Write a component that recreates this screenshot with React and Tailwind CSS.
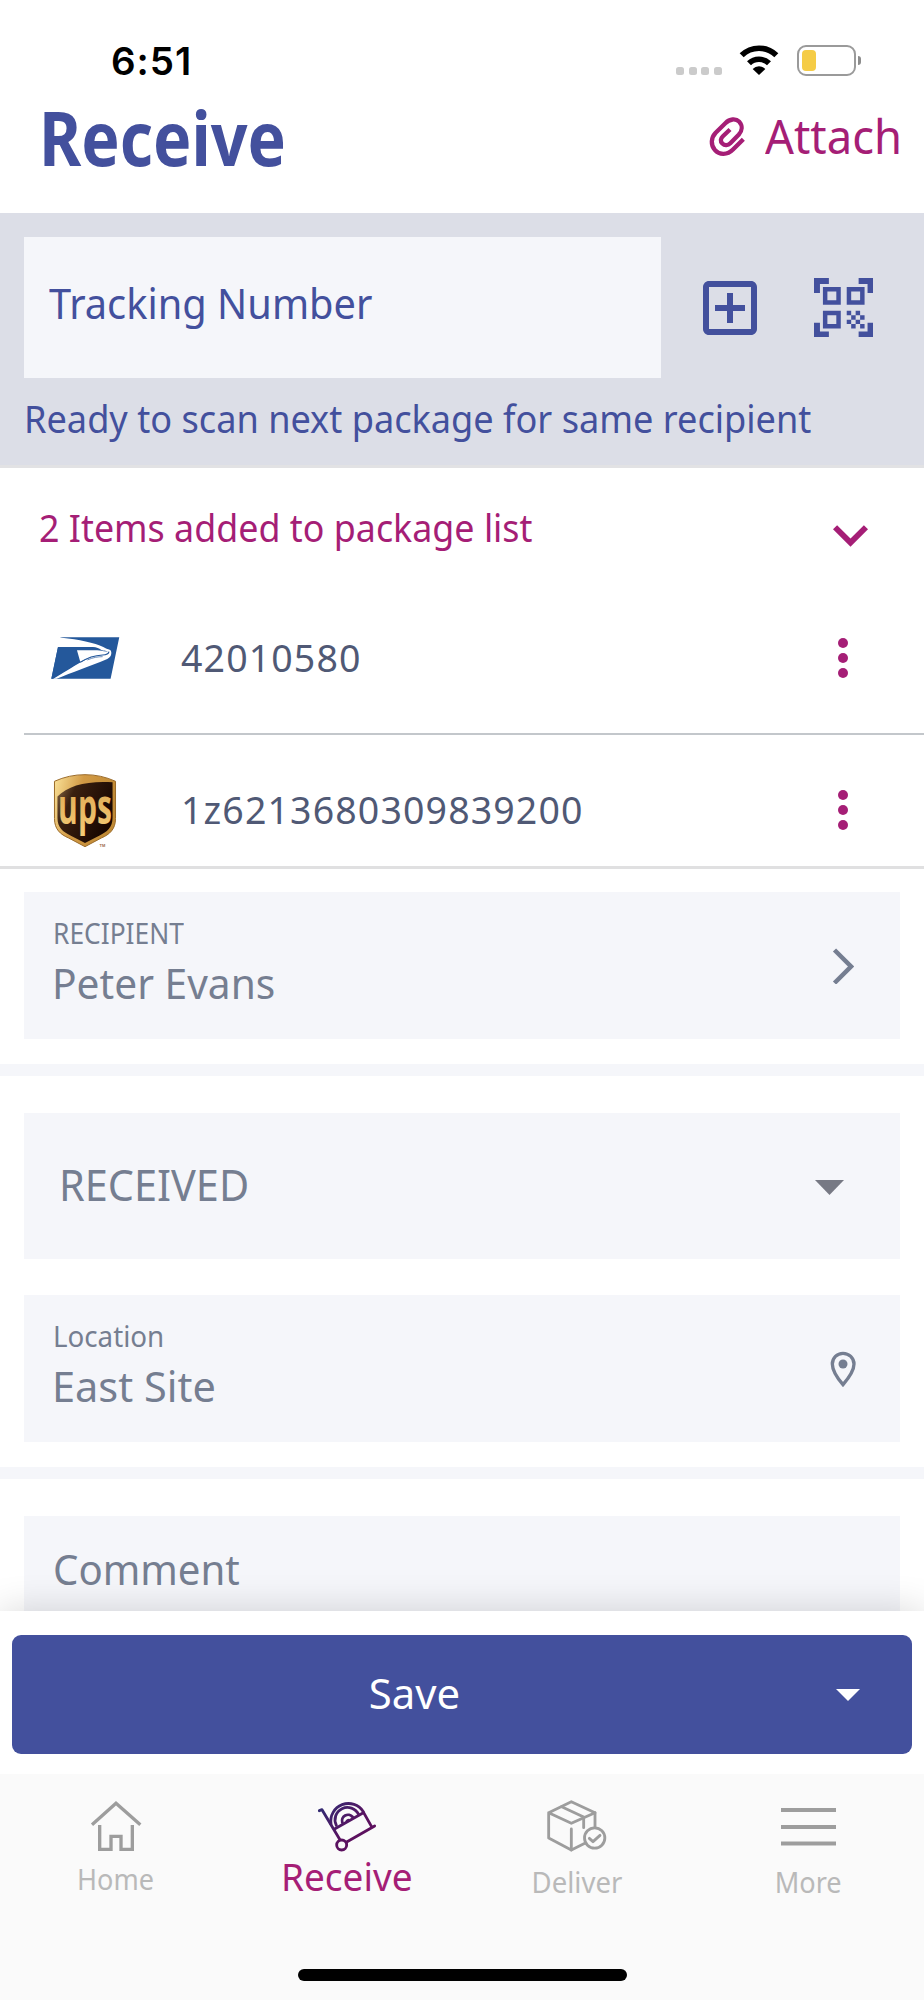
import React from "react";

const strokeProps = { fill: "none", strokeLinecap: "round", strokeLinejoin: "round" };

function StatusBar() {
  return (
    <div className="flex h-[96px] shrink-0 items-start pl-[111px] pr-[63px] pt-[37px]">
      <span className="font-['Inter'] text-[38.5px] font-semibold leading-[48px] tracking-[0.96px] text-black">6:51</span>
      <div className="ml-auto flex h-[46px] items-end">
        <div className="mb-2 flex gap-[4.7px]">
          {[0, 1, 2, 3].map((i) => (
            <span key={i} className="size-2 rounded-[2.5px] bg-[#cbcbcb]" />
          ))}
        </div>
        <svg className="mb-2 ml-[17px] h-[30px] w-10" viewBox="298 78 120 90" fill="none" stroke="#000" strokeWidth="17">
          <path d="M306 109A74 74 0 0 1 410 109" />
          <path d="M328 133A43 43 0 0 1 388 133" />
          <path d="M358 168L339 150A26 26 0 0 1 377 150Z" fill="#000" stroke="none" />
        </svg>
        <div className="mb-[7px] ml-[18px] flex h-[31px] w-[59px] items-center rounded-[9px] border-2 border-[#9a9a9a] pl-[3px]">
          <span className="h-[21px] w-[14px] rounded-[4px] bg-[#f5cc46]" />
        </div>
        <span className="mb-[18px] ml-0.5 h-[9px] w-[3px] rounded-r-full bg-[#8c8c8c]" />
      </div>
    </div>
  );
}

function Header() {
  return (
    <div className="flex h-[117px] shrink-0 items-start justify-between pl-[39px] pr-[22px]">
      <h1 className="mt-[2px] inline-block origin-left scale-x-[0.859] text-[75px] font-bold leading-[79px] text-[#43509d]">Receive</h1>
      <div className="mt-px flex h-[79px] items-center text-[#a51e76]">
        <svg className="mr-[20px] h-[41px] w-9" viewBox="208 290 108 122" stroke="currentColor" strokeWidth="13" {...strokeProps} strokeLinecap="butt">
          <path d="M311 359L280 390C263 407 239 407 226 392C212 376 214 355 228 340L257 311C270 298 288 296 299 307C309 318 308 334 297 346L272 371C265 378 255 379 248 372C241 365 243 357 249 351L271 330" />
        </svg>
        <span className="-mr-[5px] inline-block origin-left scale-x-[0.965] text-[47px] leading-[79px]">Attach</span>
      </div>
    </div>
  );
}

function ScanPanel() {
  return (
    <div className="h-[255px] shrink-0 border-b-[3px] border-[#e2e2e4] bg-[#dcdee7] pl-6 pt-6 text-[#43509d]">
      <div className="flex h-[141px] items-center">
        <div className="flex h-[141px] w-[637px] bg-[#f5f6fa] pl-[25px]">
          <span className="inline-block origin-left scale-x-[0.936] text-[42.5px] leading-[132px]">Tracking Number</span>
        </div>
        <svg className="ml-[42px] size-[54px]" viewBox="3 3 18 18" fill="currentColor">
          <path d="M19 3H5c-1.100 0-2 .9-2 2v14c0 1.100.9 2 2 2h14c1.100 0 2-.9 2-2V5c0-1.100-.9-2-2-2zm0 16H5V5h14v14zm-8-2h2v-4h4v-2h-4V7h-2v4H7v2h4z" />
        </svg>
        <svg className="ml-[56.500px] size-[59.500px]" viewBox="2 2 20 20" fill="currentColor">
          <path d="M9.5 6.500v3h-3v-3h3M11 5H5v6h6V5zM9.500 14.500v3h-3v-3h3M11 13H5v6h6v-6zM17.500 6.500v3h-3v-3h3M19 5h-6v6h6V5zM13 13h1.500v1.500H13V13zM14.500 14.500H16V16h-1.500v-1.500zM16 13h1.500v1.500H16V13zM13 16h1.500v1.500H13V16zM14.500 17.500H16V19h-1.500v-1.500zM16 16h1.500v1.500H16V16zM17.500 14.500H19V16h-1.500v-1.500zM17.500 17.500H19V19h-1.500v-1.500zM22 7h-2V4h-3V2h5v5zM22 22v-5h-2v3h-3v2h5zM2 22h5v-2H4v-3H2v5zM2 2v5h2V4h3V2H2z" />
        </svg>
      </div>
      <p className="mt-[15px] inline-block origin-left scale-x-[0.9636] whitespace-nowrap text-[37.5px] leading-[52px]">
        Ready to scan next package for same recipient
      </p>
    </div>
  );
}

function UspsLogo() {
  return (
    <svg className="h-11 w-[70.600px]" viewBox="150 468 212 132">
      <path d="M186 472H358L332 596H154L174 501L180 472Z" fill="#24589b" />
      <path d="M170 468L186 473C235 478 285 488 310 501C318 506 322 507 331 510C337 517 335 531 322 537C270 559 215 578 170 596H160C205 571 240 544 288 525C305 519 318 522 326 517C322 511 312 513 303 509C296 503 285 501 265 501H174Z" fill="#fff" />
      <path d="M174 501H270C288 502 297 506 302 512H231L241 546C215 560 185 579 158 596H154Z" fill="#24589b" />
      <path d="M231 511H292C304 511 310 516 327 514C325 523 312 523 297 525C275 529 258 537 241 546Z" fill="#fff" />
      <path d="M241 547C258 536 285 526 308 525C318 525 326 522 327 515" fill="none" stroke="#24589b" strokeWidth="3.500" />
      <path d="M262 540C280 532 295 530 308 530" fill="none" stroke="#24589b" strokeWidth="2" />
    </svg>
  );
}

function UpsLogo() {
  return (
    <svg className="h-[75px] w-16 overflow-visible" viewBox="160 875 192 226">
      <defs>
        <linearGradient id="gold" x1="0" y1="0" x2="1" y2="0.300">
          <stop offset="0" stopColor="#fbe39a" />
          <stop offset="0.450" stopColor="#d29a45" />
          <stop offset="1" stopColor="#c08a35" />
        </linearGradient>
        <linearGradient id="brown" x1="0" y1="0" x2="1" y2="0.500">
          <stop offset="0" stopColor="#8a6a45" />
          <stop offset="0.300" stopColor="#3a2010" />
          <stop offset="1" stopColor="#180600" />
        </linearGradient>
        <linearGradient id="letters" x1="0" y1="0" x2="0" y2="1">
          <stop offset="0" stopColor="#d9a04a" />
          <stop offset="1" stopColor="#f5cd78" />
        </linearGradient>
      </defs>
      <path d="M164 900Q208 880 256 880Q304 880 348 900V1012C348 1045 330 1060 305 1071L256 1097L207 1071C182 1060 164 1045 164 1012Z" fill="url(#gold)" stroke="#9a6a28" strokeWidth="3" />
      <path d="M173 946C205 912 265 898 339 903V1010C339 1040 322 1053 300 1063L256 1086L212 1063C190 1053 173 1040 173 1010Z" fill="url(#brown)" />
      <text x="175" y="1028" textLength="162" lengthAdjust="spacingAndGlyphs" fontFamily="'Open Sans'" fontWeight="700" fontSize="143" fill="url(#letters)">ups</text>
      <text x="300" y="1099" fontFamily="'Liberation Sans'" fontWeight="700" fontSize="12" fill="#9a6a48">TM</text>
    </svg>
  );
}

function PackageRow({ logo, children }) {
  return (
    <div className="flex h-[150px] shrink-0 items-center pr-[76px]">
      <div className="flex w-[130px] shrink-0 justify-center">{logo}</div>
      <span className="mb-px text-[37.500px] leading-[52px] text-[#505975]">{children}</span>
      <div className="ml-auto flex flex-col gap-[5px] text-[#a51e76]">
        {[0, 1, 2].map((i) => (
          <span key={i} className="size-[10px] rounded-full bg-current" />
        ))}
      </div>
    </div>
  );
}

function PackageList() {
  return (
    <div className="flex h-[401px] shrink-0 flex-col overflow-hidden border-b-[3px] border-[#e0e0e1]">
      <div className="flex h-[115px] shrink-0 items-start pl-[39px] pr-[56px] pt-[34px] text-[#a51e76]">
        <span className="inline-block origin-left scale-x-[0.9555] text-[37.500px] leading-[52px]">2 Items added to package list</span>
        <svg className="ml-auto mt-[23px] h-[22px] w-[35px]" viewBox="6 8.590 12 7.410" fill="currentColor">
          <path d="M16.590 8.590L12 13.170 7.410 8.590 6 10l6 6 6-6z" />
        </svg>
      </div>
      <div className="ml-6 shrink-0 border-b-2 border-[#c3c7cb]">
        <div className="-ml-6">
          <PackageRow logo={<span className="pl-[41px]"><UspsLogo /></span>}>
            <span className="ml-[51px] tracking-[1.120px]">42010580</span>
          </PackageRow>
        </div>
      </div>
      <PackageRow logo={<span className="pl-10"><UpsLogo /></span>}>
        <span className="ml-[51px] tracking-[1.130px]">1z6213680309839200</span>
      </PackageRow>
    </div>
  );
}

function Band() {
  return <div className="h-3 shrink-0 bg-[#f5f6fa]" />;
}

function Form() {
  return (
    <div className="flex h-[742px] shrink-0 flex-col overflow-hidden text-[#757e91]">
      <div className="mx-6 mt-[23px] flex h-[147px] shrink-0 items-center justify-between bg-[#f5f6fa] pl-[29px] pr-[46px]">
        <div className="flex flex-col items-start">
          <span className="inline-block origin-left scale-x-[0.909] text-[29px] leading-10">RECIPIENT</span>
          <span className="mb-[15px] mt-[10px] inline-block origin-left scale-x-[0.957] text-[42.500px] leading-10 -ml-px">Peter Evans</span>
        </div>
        <svg className="h-[36px] w-[22px]" viewBox="0 0 22 36" fill="none" stroke="currentColor" strokeWidth="4.500">
          <path d="M2.500 2L19 18.500L2.500 35" />
        </svg>
      </div>
      <div className="h-[25px] shrink-0" />
      <Band />
      <div className="mx-6 mt-[37px] flex h-[146px] shrink-0 items-center justify-between bg-[#f5f6fa] pl-[35px] pr-14">
        <span className="mb-[3px] inline-block origin-left scale-x-[0.963] text-[43px] leading-[60px]">RECEIVED</span>
        <svg className="mt-[3px] h-[15px] w-[29px]" viewBox="0 0 29 15" fill="#777984"><path d="M0 0H29L14.500 15Z" /></svg>
      </div>
      <div className="mx-6 mt-9 flex h-[147px] shrink-0 items-center justify-between bg-[#f5f6fa] pl-[29px] pr-11">
        <div className="flex flex-col items-start">
          <span className="inline-block origin-left scale-x-[0.956] text-[29px] leading-10">Location</span>
          <span className="mb-[15px] mt-[10px] inline-block origin-left scale-x-[0.976] text-[42.500px] leading-10 -ml-px">East Site</span>
        </div>
        <svg className="h-[36px] w-[26px]" viewBox="391 751 78 108" fill="none" stroke="currentColor" strokeWidth="10">
          <path d="M430 758C412 758 398 772 398 790C398 811 412 831 430 852C448 831 463 811 463 790C463 772 448 758 430 758Z" />
          <circle cx="430" cy="790" r="13.500" fill="currentColor" stroke="none" />
        </svg>
      </div>
      <div className="h-[25px] shrink-0" />
      <Band />
      <div className="mx-6 mt-[37px] flex h-[147px] shrink-0 items-start bg-[#f5f6fa] pl-[29px] pt-[23px]">
        <span className="inline-block origin-left scale-x-[0.945] text-[42.500px] leading-[60px]">Comment</span>
      </div>
    </div>
  );
}

function SaveBar() {
  return (
    <div className="relative h-[163px] shrink-0 bg-white px-3 pt-6 shadow-[0_0_36px_rgba(0,0,0,0.16)]">
      <div className="flex h-[118.500px] items-center rounded-[9px] bg-[#43509d] pr-[52px] text-white">
        <span className="mb-[3px] flex-1 pr-[20px] text-center text-[42.500px] leading-[60px]">
          <span className="inline-block scale-x-[0.985]">Save</span>
        </span>
        <svg className="mt-[2px] h-3 w-6" viewBox="0 0 24 12" fill="currentColor"><path d="M0 0H24L12 12Z" /></svg>
      </div>
    </div>
  );
}

function HomeIcon() {
  return (
    <svg className="h-[52px] w-[52px]" viewBox="269 599 156 156" fill="none" stroke="#9d9d9d" strokeWidth="10">
      <path d="M275 673L347 608.500L420 673" />
      <path d="M298 674V747H332V708H362V747H396V674" />
    </svg>
  );
}

function CartIcon() {
  return (
    <svg className="h-[52px] w-[60px]" viewBox="949 599 180 156" stroke="url(#cart)" strokeWidth="8.500" {...strokeProps}>
      <defs>
        <linearGradient id="cart" gradientUnits="userSpaceOnUse" x1="960" y1="610" x2="1100" y2="750">
          <stop offset="0" stopColor="#2f2c73" />
          <stop offset="0.600" stopColor="#5a1260" />
          <stop offset="1" stopColor="#5f0f5c" />
        </linearGradient>
      </defs>
      <path d="M956 631L964 628L1017 717" />
      <circle cx="1023" cy="734" r="15" />
      <path d="M1038 725L1122 677M1089 637L1114 681" />
      <path d="M1003 685L1088 637" />
      <path d="M991 671A53 53 0 0 1 1088 634" />
      <path d="M1007 675A36 36 0 0 1 1074 642" />
      <path d="M1025 667A18 18 0 0 1 1056 650" />
      <path d="M1039 662L1043 660" />
    </svg>
  );
}

function BoxIcon() {
  return (
    <svg className="h-[52px] w-[61px]" viewBox="254 598 183 156" stroke="#9d9d9d" strokeWidth="8.500" {...strokeProps}>
      <path d="M330 603L401 636L330 668L262 636ZM262 636V712L330 748L372 727" />
      <path d="M330 685V748M401 636V680M301 618L367 649V681" />
      <circle cx="400" cy="712" r="30.500" />
      <path d="M384 713L395 723L416 704" />
    </svg>
  );
}

function MenuIcon() {
  return (
    <svg className="h-[52px] w-[55px]" viewBox="0 0 55 52" fill="#9d9d9d">
      <path d="M0 8H55V12H0ZM0 25H55V29H0ZM0 41.500H55V45.500H0Z" />
    </svg>
  );
}

function TabBar() {
  return (
    <div className="relative flex h-[226px] shrink-0 flex-col items-center bg-[#fafafa]">
      <div className="grid h-[195px] w-full grid-cols-4 pt-[26px] text-[28.500px] leading-10 text-[#b9b9b9]">
        <div className="flex flex-col items-center">
          <HomeIcon />
          <span className="mt-[7px] inline-block scale-x-[0.949]">Home</span>
        </div>
        <div className="flex flex-col items-center">
          <CartIcon />
          <span className="mt-[5px] inline-block scale-x-[0.986] text-[37.500px] text-[#a51e76]">Receive</span>
        </div>
        <div className="flex flex-col items-center pr-[2px]">
          <BoxIcon />
          <span className="mt-[10px] inline-block scale-x-[0.966]">Deliver</span>
        </div>
        <div className="flex flex-col items-center">
          <MenuIcon />
          <span className="mt-[10px] inline-block scale-x-[0.951]">More</span>
        </div>
      </div>
      <div className="h-3 w-[329px] rounded-full bg-black" />
    </div>
  );
}

export default function App() {
  return (
    <div className="flex h-[2000px] w-[924px] flex-col overflow-hidden bg-white font-['Noto_Sans',sans-serif]">
      <StatusBar />
      <Header />
      <ScanPanel />
      <PackageList />
      <Form />
      <SaveBar />
      <TabBar />
    </div>
  );
}
